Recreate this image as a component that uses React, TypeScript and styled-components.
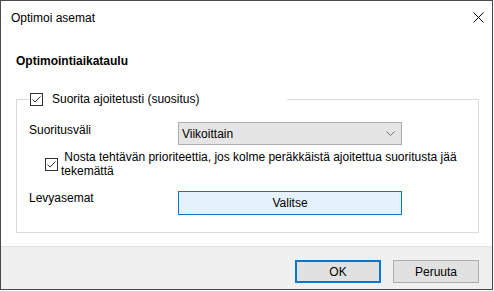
import React from 'react';
import styled, { createGlobalStyle } from 'styled-components';

const GlobalStyle = createGlobalStyle`
	html,
	body {
		margin: 0;
		padding: 0;
		background: #ffffff;
	}
	body {
		font-family: 'Liberation Sans', Arial, sans-serif;
		font-size: 12px;
		color: #000000;
	}
`;

const Window = styled.div`
	width: 493px;
	height: 290px;
	box-sizing: border-box;
	border: 1px solid #4b4b4b;
	background: #ffffff;
	display: flex;
	flex-direction: column;
`;

const TitleBar = styled.div`
	height: 33px;
	flex: none;
	display: flex;
	align-items: center;
	justify-content: space-between;
	padding: 0 8px 0 10px;
`;

const Title = styled.span`
	line-height: 16px;
`;

const Content = styled.div`
	flex: 1;
	padding: 0 13px 0 15px;
`;

const Heading = styled.div`
	margin-top: 19px;
	line-height: 16px;
	font-weight: 700;
`;

const Group = styled.fieldset`
	margin: 22px 0 0 0;
	padding: 0 13px 17px 12px;
	border: 1px solid #dcdcdc;
	min-width: 0;
`;

const Legend = styled.legend`
	width: 256px;
	padding: 0 1px;
	display: flex;
	align-items: center;
	gap: 9px;
	line-height: 16px;
`;

const FieldRow = styled.div<{ $top: number }>`
	display: grid;
	grid-template-columns: 149px 224px;
	align-items: start;
	margin-top: ${(p) => p.$top}px;
`;

const FieldLabel = styled.span<{ $pad?: number }>`
	line-height: 14px;
	padding-top: ${(p) => p.$pad ?? 1}px;
`;

const Select = styled.div`
	height: 23px;
	box-sizing: border-box;
	border: 1px solid #adadad;
	background: #e5e5e5;
	display: flex;
	align-items: center;
	justify-content: space-between;
	padding: 0 6px 0 3px;
`;

const CheckRow = styled.label`
	display: flex;
	align-items: center;
	gap: 3px;
	margin: 5px 0 0 16px;
`;

const CheckText = styled.span`
	flex: none;
	width: 410px;
	line-height: 14px;
	white-space: pre-wrap;
`;

const Button = styled.button<{ $primary?: boolean; $tone?: 'accent' | 'plain' }>`
	font: inherit;
	color: #000000;
	box-sizing: border-box;
	height: 23px;
	padding: 0;
	cursor: default;
	background: ${(p) => (p.$tone === 'accent' ? '#e5f1fb' : '#e1e1e1')};
	border: ${(p) =>
		p.$primary
			? '2px solid #0078d7'
			: p.$tone === 'accent'
			? '1px solid #0078d7'
			: '1px solid #adadad'};
`;

const WideButton = styled(Button)`
	width: 224px;
	height: 24px;
`;

const Footer = styled.div`
	height: 43px;
	flex: none;
	box-sizing: border-box;
	background: #f0f0f0;
	border-top: 1px solid #e3e3e3;
	display: flex;
	justify-content: flex-end;
	align-items: flex-start;
	gap: 12px;
	padding: 13px 13px 0 0;
`;

const DialogButton = styled(Button)`
	width: 86px;
`;

const CheckBox = () => (
	<svg width='13' height='13' viewBox='0 0 13 13' style={{ flex: 'none' }}>
		<rect x='0.5' y='0.5' width='12' height='12' fill='#ffffff' stroke='#333333' />
		<path d='M2.5 6.5 L5 9 L10.5 3.5' fill='none' stroke='#333333' strokeWidth='1' />
	</svg>
);

const Chevron = () => (
	<svg width='9' height='5' viewBox='0 0 9 5'>
		<path d='M0.5 0.5 L4.5 4.5 L8.5 0.5' fill='none' stroke='#707070' strokeWidth='1' />
	</svg>
);

const CloseIcon = () => (
	<svg width='11' height='11' viewBox='0 0 11 11'>
		<path d='M0.5 0.5 L10.5 10.5 M10.5 0.5 L0.5 10.5' stroke='#000000' strokeWidth='1' />
	</svg>
);

const App = () => {
	return (
		<>
			<GlobalStyle />
			<Window>
				<TitleBar>
					<Title>Optimoi asemat</Title>
					<CloseIcon />
				</TitleBar>
				<Content>
					<Heading>Optimointiaikataulu</Heading>
					<Group>
						<Legend>
							<CheckBox />
							<span>Suorita ajoitetusti (suositus)</span>
						</Legend>
						<FieldRow $top={15}>
							<FieldLabel>Suoritusväli</FieldLabel>
							<Select>
								<span>Viikoittain</span>
								<Chevron />
							</Select>
						</FieldRow>
						<CheckRow>
							<CheckBox />
							<CheckText>
								{' Nosta tehtävän prioriteettia, jos kolme peräkkäistä ajoitettua suoritusta jää tekemättä'}
							</CheckText>
						</CheckRow>
						<FieldRow $top={13}>
							<FieldLabel $pad={0}>Levyasemat</FieldLabel>
							<WideButton $tone='accent'>Valitse</WideButton>
						</FieldRow>
					</Group>
				</Content>
				<Footer>
					<DialogButton $primary>OK</DialogButton>
					<DialogButton>Peruuta</DialogButton>
				</Footer>
			</Window>
		</>
	);
};

export default App;
